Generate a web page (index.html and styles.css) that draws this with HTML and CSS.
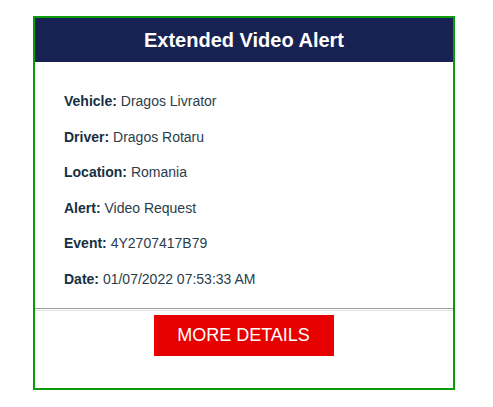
FILE: index.html
```html
<!DOCTYPE html>
<html>
<head>
<meta charset="utf-8">
<link rel="stylesheet" href="styles.css">
</head>
<body>
<div class="card">
  <div class="card-header">Extended Video Alert</div>
  <div class="details">
    <div class="row"><span class="label">Vehicle:</span> Dragos Livrator</div>
    <div class="row"><span class="label">Driver:</span> Dragos Rotaru</div>
    <div class="row"><span class="label">Location:</span> Romania</div>
    <div class="row"><span class="label">Alert:</span> Video Request</div>
    <div class="row"><span class="label">Event:</span> 4Y2707417B79</div>
    <div class="row"><span class="label">Date:</span> 01/07/2022 07:53:33 AM</div>
  </div>
  <div class="divider"></div>
  <div class="actions">
    <a class="btn" href="#">MORE DETAILS</a>
  </div>
</div>
</body>
</html>
```
FILE: styles.css
```css
html, body {
  margin: 0;
  padding: 0;
  background: #ffffff;
}
body {
  padding: 16px 0 0 33px;
  font-family: "Liberation Sans", Arial, sans-serif;
}
.card {
  width: 418px;
  height: 370px;
  border: 2px solid #0a9a0a;
  display: flex;
  flex-direction: column;
}
.card-header {
  background: #172253;
  color: #ffffff;
  height: 44px;
  display: flex;
  align-items: center;
  justify-content: center;
  font-size: 20px;
  font-weight: bold;
}
.details {
  padding: 29px 0 0 29px;
  display: flex;
  flex-direction: column;
  gap: 14px;
}
.row {
  font-size: 14px;
  line-height: 21.6px;
  color: #2a3d4a;
}
.label {
  font-weight: bold;
  color: #17303f;
}
.divider {
  margin-top: 17px;
  height: 1px;
  border-top: 1px solid #9c9c9c;
  border-bottom: 1px solid #e2e2e2;
}
.actions {
  display: flex;
  justify-content: center;
  padding-top: 4px;
  padding-right: 1px;
}
.btn {
  display: flex;
  align-items: center;
  justify-content: center;
  width: 180px;
  height: 41px;
  background: #e60000;
  color: #ffffff;
  font-size: 18px;
  text-decoration: none;
}
```
